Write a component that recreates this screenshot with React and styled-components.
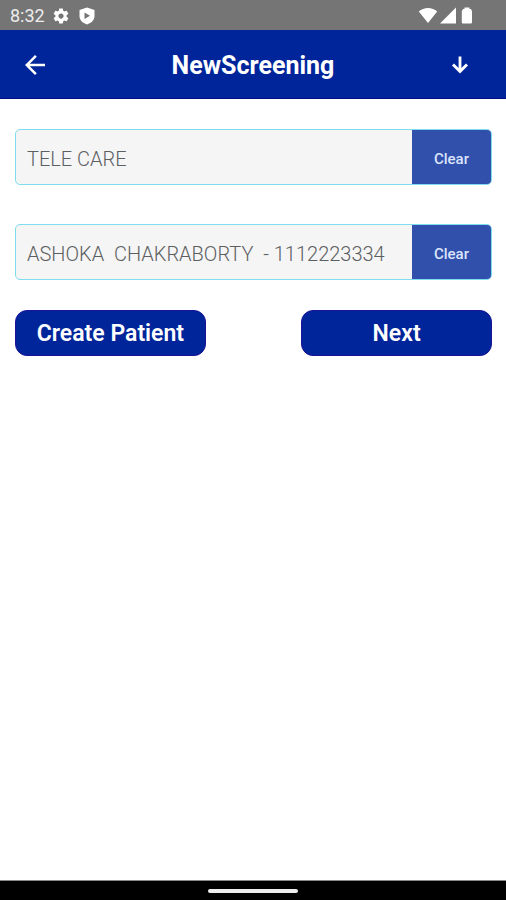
import React, { useState } from "react";
import styled, { createGlobalStyle } from "styled-components";

const GlobalStyle = createGlobalStyle`
  * { box-sizing: border-box; }
  body { margin: 0; background: #fff; font-family: Roboto, sans-serif; }
  button, input { font-family: inherit; }
`;

const Screen = styled.div`
  min-height: 100vh;
  display: flex;
  flex-direction: column;
`;

const StatusBar = styled.div`
  height: 30px;
  padding: 2px 31px 0 10px;
  display: flex;
  justify-content: space-between;
  align-items: center;
  background: #757575;
  color: #fff;
`;

const StatusGroup = styled.div`
  display: flex;
  align-items: center;
  gap: ${(p) => p.$gap}px;
`;

const Time = styled.span`
  font-size: 18px;
  line-height: 28px;
  color: #ececec;
`;

const Icon = styled.svg`
  display: block;
  flex: none;
  fill: currentColor;
`;

const Header = styled.header`
  height: 69px;
  padding: 2px 34px 0 20px;
  display: grid;
  grid-template-columns: 30px 1fr 24px;
  align-items: center;
  background: #00259a;
  border-bottom: 1px solid #000c80;
  color: #fff;
`;

const IconButton = styled.button`
  padding: 0;
  border: 0;
  background: none;
  color: inherit;
  cursor: pointer;
`;

const Title = styled.h1`
  margin: 0;
  padding: 2px 0 0 8px;
  font-size: 25px;
  line-height: 30px;
  font-weight: 700;
  text-align: center;
`;

const Form = styled.main`
  flex: 1;
  padding: 30px 14px 30px 15px;
`;

const Field = styled.div`
  height: 56px;
  margin-bottom: ${(p) => p.$after}px;
  display: flex;
  overflow: hidden;
  border: 1px solid #7edcee;
  border-radius: 5px;
  background: #f5f5f5;
`;

const FieldInput = styled.input`
  flex: 1;
  min-width: 0;
  padding: 3px 11px 0;
  border: 0;
  outline: 0;
  background: transparent;
  color: #5c5f62;
  font-size: 20px;
  font-weight: 300;
`;

const ClearButton = styled.button`
  width: 79px;
  padding: 3px 0 0;
  border: 0;
  background: #3050ac;
  color: #dce4fa;
  font-size: 15px;
  font-weight: 500;
  cursor: pointer;
`;

const Actions = styled.div`
  display: flex;
  justify-content: space-between;
  gap: 16px;
`;

const ActionButton = styled.button`
  width: 40%;
  height: 46px;
  padding: 2px 0 0;
  border: 1px solid #1a1299;
  border-radius: 12px;
  background: #00259a;
  color: #fff;
  font-size: 23px;
  line-height: 30px;
  font-weight: 600;
  white-space: nowrap;
  cursor: pointer;
`;

const NavBar = styled.div`
  height: 20px;
  padding-top: 1px;
  display: flex;
  align-items: center;
  justify-content: center;
  border-top: 1px solid #8a8a8a;
  background: #000;
`;

const HomeHandle = styled.div`
  width: 90px;
  height: 4px;
  border-radius: 2px;
  background: #eee;
`;

function ClearableField({ label, initial, after }) {
  const [value, setValue] = useState(initial);
  return (
    <Field $after={after}>
      <FieldInput aria-label={label} value={value} onChange={(e) => setValue(e.target.value)} />
      <ClearButton type="button" onClick={() => setValue("")}>Clear</ClearButton>
    </Field>
  );
}

export default function App() {
  return (
    <Screen>
      <GlobalStyle />
      <StatusBar>
        <StatusGroup $gap={7}>
          <Time>8:32</Time>
          <Icon width="18" height="18" viewBox="0 0 24 24" aria-hidden="true">
            <path d="M19.43 12.98c.04-.32.07-.64.07-.98s-.03-.66-.07-.98l2.11-1.65c.19-.15.24-.42.12-.64l-2-3.46c-.12-.22-.39-.3-.61-.22l-2.49 1c-.52-.4-1.08-.73-1.69-.98l-.38-2.65C14.46 2.18 14.25 2 14 2h-4c-.25 0-.46.18-.49.42l-.38 2.65c-.61.25-1.17.59-1.69.98l-2.49-1c-.23-.09-.49 0-.61.22l-2 3.46c-.13.22-.07.49.12.64l2.11 1.65c-.04.32-.07.65-.07.98s.03.66.07.98l-2.11 1.65c-.19.15-.24.42-.12.64l2 3.46c.12.22.39.3.61.22l2.49-1c.52.4 1.08.73 1.69.98l.38 2.65c.03.24.24.42.49.42h4c.25 0 .46-.18.49-.42l.38-2.65c.61-.25 1.17-.59 1.69-.98l2.49 1c.23.09.49 0 .61-.22l2-3.46c.12-.22.07-.49-.12-.64l-2.11-1.65zM12 15.5c-1.93 0-3.5-1.57-3.5-3.5s1.57-3.5 3.5-3.5 3.5 1.57 3.5 3.5-1.57 3.5-3.5 3.5z" />
          </Icon>
          <Icon width="20" height="18" viewBox="0 0 20 18" aria-hidden="true">
            <path fillRule="evenodd" d="M10 .5 17.500 3v6c0 4-3 7-7.500 8.500C5.500 16 2.500 13 2.500 9V3zM7.500 5.500v6.400L13 8.700z" />
          </Icon>
        </StatusGroup>
        <StatusGroup $gap={2}>
          <Icon width="20" height="18" viewBox="0 0 20 18" aria-hidden="true">
            <path d="M10 16 .8 4.600C3.300 2.200 6.600 1 10 1s6.700 1.200 9.200 3.600z" />
          </Icon>
          <Icon width="17" height="18" viewBox="0 0 17 18" aria-hidden="true">
            <path d="M0 16.500 16 .5v16z" />
          </Icon>
          <Icon width="16" height="18" viewBox="0 0 16 18" aria-hidden="true">
            <path d="M5.500.5h5V2h1.500l1 2.200v11c0 .8-.6 1.300-1.400 1.300H4.200c-.8 0-1.400-.5-1.400-1.300v-11L4 2h1.500z" />
          </Icon>
        </StatusGroup>
      </StatusBar>
      <Header>
        <IconButton type="button" aria-label="Back">
          <Icon width="30" height="30" viewBox="0 0 24 24" aria-hidden="true">
            <path d="M20 11H7.830l5.590-5.590L12 4l-8 8 8 8 1.410-1.410L7.830 13H20v-2z" />
          </Icon>
        </IconButton>
        <Title>NewScreening</Title>
        <IconButton type="button" aria-label="Download">
          <Icon width="24" height="24" viewBox="0 0 24 24" aria-hidden="true">
            <path d="M10.600 3.500h2.800v11.600l4.600-4.600L20 12.400l-8 8-8-8 2-1.900 4.600 4.600z" />
          </Icon>
        </IconButton>
      </Header>
      <Form>
        <ClearableField label="Program" initial="TELE CARE" after={39} />
        <ClearableField label="Patient" initial="ASHOKA  CHAKRABORTY  - 1112223334" after={30} />
        <Actions>
          <ActionButton type="button">Create Patient</ActionButton>
          <ActionButton type="button">Next</ActionButton>
        </Actions>
      </Form>
      <NavBar>
        <HomeHandle />
      </NavBar>
    </Screen>
  );
}
